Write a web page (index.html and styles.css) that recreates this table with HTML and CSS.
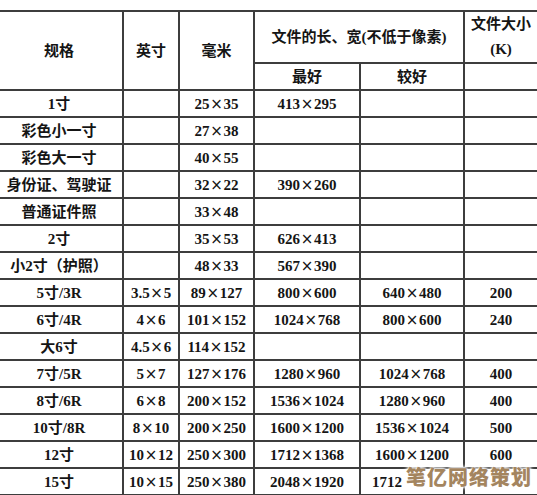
FILE: index.html
```html
<!DOCTYPE html>
<html lang="zh">
<head>
<meta charset="utf-8">
<title>照片尺寸表</title>
<link rel="stylesheet" href="styles.css">
</head>
<body>
<div class="page">
<table class="sizes">
  <colgroup>
    <col class="c1"><col class="c2"><col class="c3"><col class="c4"><col class="c5"><col class="c6">
  </colgroup>
  <thead>
    <tr class="h1">
      <th rowspan="2">规格</th>
      <th rowspan="2">英寸</th>
      <th rowspan="2">毫米</th>
      <th colspan="2">文件的长、宽(不低于像素)</th>
      <th class="two">文件大小<br>(K)</th>
    </tr>
    <tr class="h2">
      <th>最好</th>
      <th>较好</th>
      <th></th>
    </tr>
  </thead>
  <tbody>
    <tr><td>1寸</td><td></td><td>25<span class="x">×</span>35</td><td>413<span class="x">×</span>295</td><td></td><td></td></tr>
    <tr><td>彩色小一寸</td><td></td><td>27<span class="x">×</span>38</td><td></td><td></td><td></td></tr>
    <tr><td>彩色大一寸</td><td></td><td>40<span class="x">×</span>55</td><td></td><td></td><td></td></tr>
    <tr><td>身份证、驾驶证</td><td></td><td>32<span class="x">×</span>22</td><td>390<span class="x">×</span>260</td><td></td><td></td></tr>
    <tr><td>普通证件照</td><td></td><td>33<span class="x">×</span>48</td><td></td><td></td><td></td></tr>
    <tr><td>2寸</td><td></td><td>35<span class="x">×</span>53</td><td>626<span class="x">×</span>413</td><td></td><td></td></tr>
    <tr><td>小2寸（护照）</td><td></td><td>48<span class="x">×</span>33</td><td>567<span class="x">×</span>390</td><td></td><td></td></tr>
    <tr><td>5寸/3R</td><td>3.5<span class="x">×</span>5</td><td>89<span class="x">×</span>127</td><td>800<span class="x">×</span>600</td><td>640<span class="x">×</span>480</td><td>200</td></tr>
    <tr><td>6寸/4R</td><td>4<span class="x">×</span>6</td><td>101<span class="x">×</span>152</td><td>1024<span class="x">×</span>768</td><td>800<span class="x">×</span>600</td><td>240</td></tr>
    <tr><td>大6寸</td><td>4.5<span class="x">×</span>6</td><td>114<span class="x">×</span>152</td><td></td><td></td><td></td></tr>
    <tr><td>7寸/5R</td><td>5<span class="x">×</span>7</td><td>127<span class="x">×</span>176</td><td>1280<span class="x">×</span>960</td><td>1024<span class="x">×</span>768</td><td>400</td></tr>
    <tr><td>8寸/6R</td><td>6<span class="x">×</span>8</td><td>200<span class="x">×</span>152</td><td>1536<span class="x">×</span>1024</td><td>1280<span class="x">×</span>960</td><td>400</td></tr>
    <tr><td>10寸/8R</td><td>8<span class="x">×</span>10</td><td>200<span class="x">×</span>250</td><td>1600<span class="x">×</span>1200</td><td>1536<span class="x">×</span>1024</td><td>500</td></tr>
    <tr><td>12寸</td><td>10<span class="x">×</span>12</td><td>250<span class="x">×</span>300</td><td>1712<span class="x">×</span>1368</td><td>1600<span class="x">×</span>1200</td><td>600</td></tr>
    <tr><td>15寸</td><td>10<span class="x">×</span>15</td><td>250<span class="x">×</span>380</td><td>2048<span class="x">×</span>1920</td><td class="left">1712</td><td></td></tr>
  </tbody>
</table>
<div class="watermark">笔亿网络策划</div>
</div>
</body>
</html>
```

FILE: styles.css
```css
html, body {
  margin: 0;
  padding: 0;
  background: #ffffff;
  overflow: hidden;
}
.page {
  position: relative;
  width: 537px;
  height: 495px;
  overflow: hidden;
}
.sizes {
  border-collapse: collapse;
  table-layout: fixed;
  width: 545px;
  margin-top: 10px;
  margin-left: -6px;
  font-family: "Liberation Serif", "Noto Sans CJK SC", serif;
  font-size: 15px;
  font-weight: bold;
  color: #151515;
}
.c1 { width: 128px; }
.c2 { width: 56px; }
.c3 { width: 75px; }
.c4 { width: 106px; }
.c5 { width: 104px; }
.c6 { width: 74px; }
.sizes th, .sizes td {
  border: 2px solid #3d3d3d;
  padding: 0;
  text-align: center;
  vertical-align: middle;
  white-space: nowrap;
  font-weight: bold;
  line-height: 16px;
}
.sizes td.left {
  text-align: left;
  padding-left: 11px;
}
.sizes .h1 { height: 52px; }
.sizes .h2 { height: 27px; }
.sizes tbody tr { height: 27px; }
.sizes th.two { line-height: 25px; }
.x {
  display: inline-block;
  width: 14px;
  text-align: center;
  font-family: "DejaVu Sans", sans-serif;
  font-weight: normal;
  font-size: 15px;
}
.watermark {
  position: absolute;
  left: 406px;
  top: 467px;
  font-family: "Noto Sans CJK SC", sans-serif;
  font-size: 20px;
  font-weight: 900;
  letter-spacing: 1px;
  color: #a4855f;
  text-shadow: 0 0 2px #fff, 0 0 3px #fff, 0 0 4px #fff, 0 0 5px #fff;
  line-height: 20px;
}
```
